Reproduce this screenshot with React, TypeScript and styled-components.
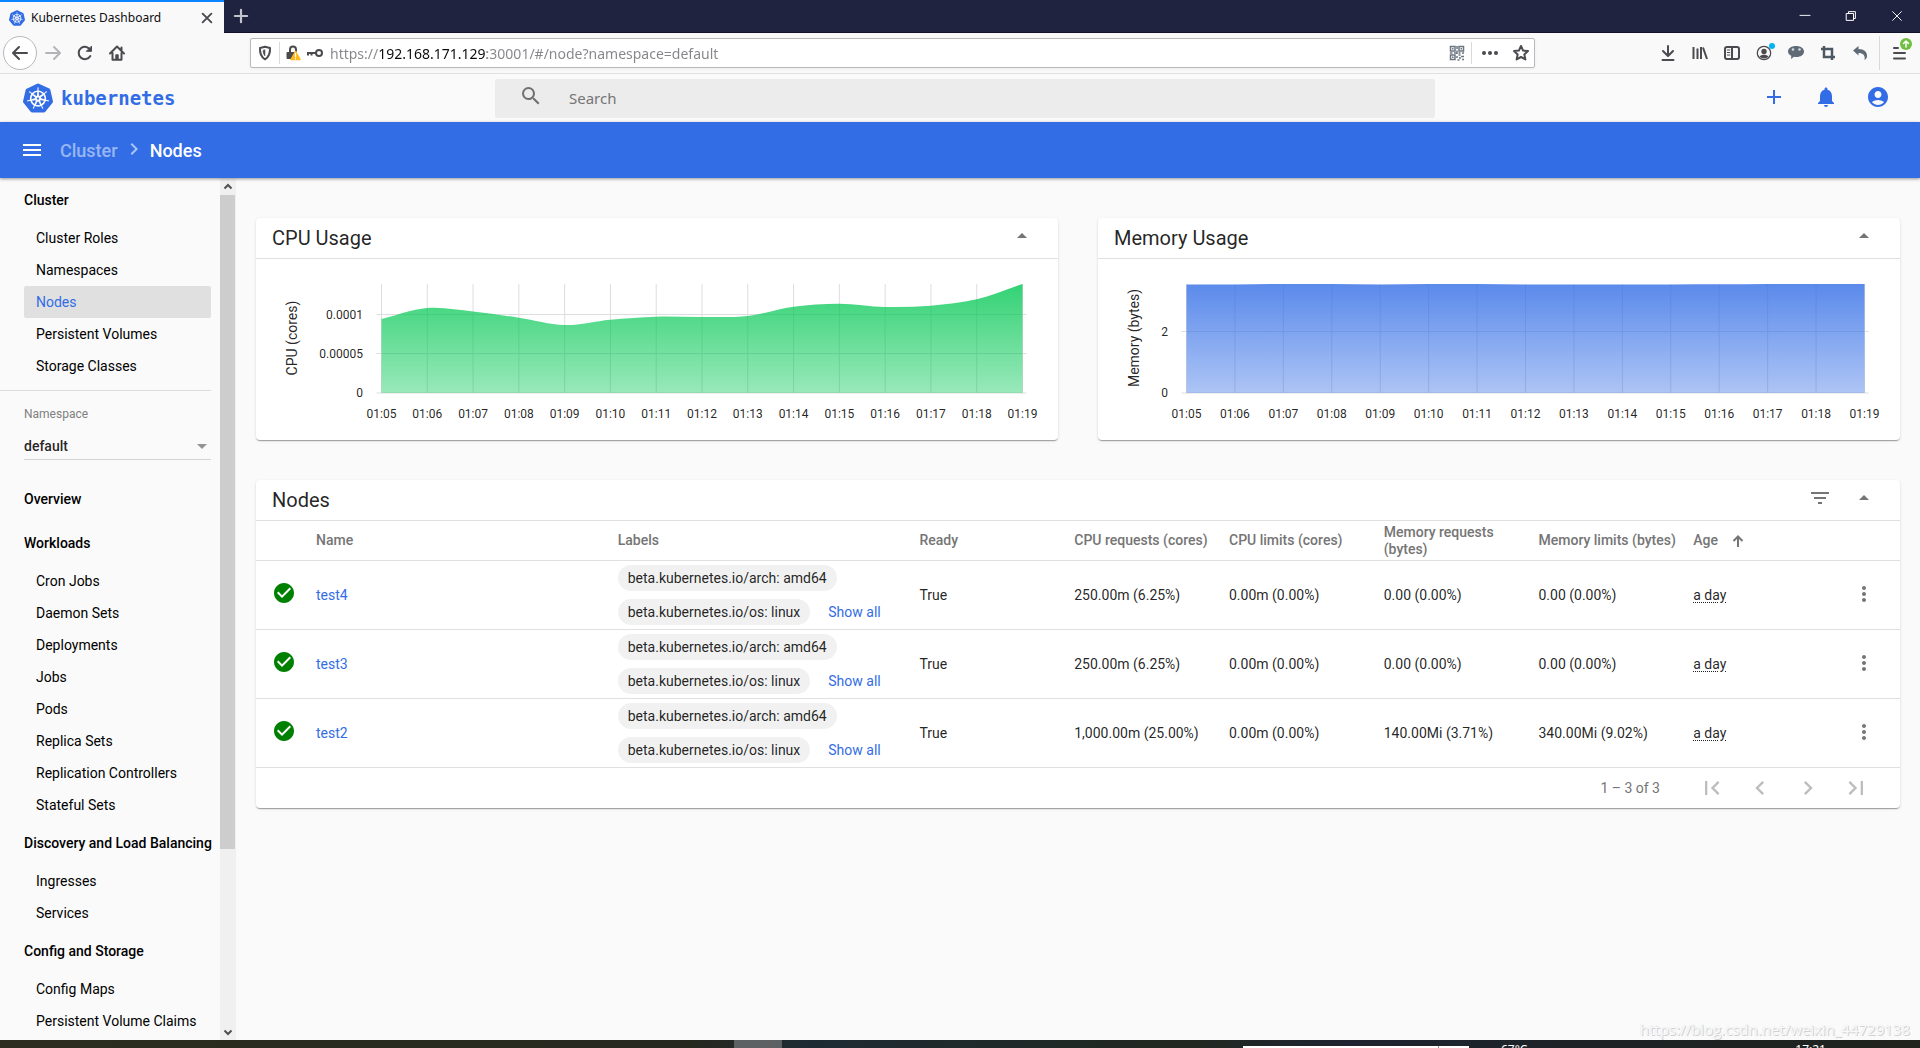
import React, { useId } from "react";
import styled, { createGlobalStyle, css } from "styled-components";
import {
  MdAccountCircle,
  MdAdd,
  MdArrowDropDown,
  MdArrowDropUp,
  MdCheckCircle,
  MdChevronLeft,
  MdChevronRight,
  MdFilterList,
  MdFirstPage,
  MdLastPage,
  MdMenu,
  MdMoreVert,
  MdNotifications,
  MdSearch,
} from "react-icons/md";
import { SiKubernetes } from "react-icons/si";

const blue = "#326de6";
const line = "#e0e0e0";
const uiFont = '"Noto Sans", "Open Sans", sans-serif';

const GlobalStyle = createGlobalStyle`
  *, *::before, *::after { box-sizing: border-box; }
  body {
    margin: 0;
    background: #fafafa;
    color: rgba(0, 0, 0, 0.87);
    font: 14px/20px Roboto, sans-serif;
  }
  button, input, select { font: inherit; color: inherit; }
  svg { display: block; flex: none; }
`;

const Window = styled.div`
  display: flex;
  flex-direction: column;
  height: 100vh;
  overflow: hidden;
`;

const PlainButton = styled.button`
  display: flex;
  align-items: center;
  justify-content: center;
  padding: 0;
  border: 0;
  background: none;
`;

/* Browser chrome */

const TabStrip = styled.div`
  display: flex;
  height: 33px;
  flex: none;
  background: #20233f;
  border-bottom: 1px solid #11122a;
  color: #fff;
  font-family: ${uiFont};
`;

const Tab = styled.div`
  display: flex;
  align-items: center;
  width: 224px;
  height: 33px;
  padding: 0 8px 0 9px;
  gap: 6px;
  background: #f9f9fa;
  border-top: 2px solid #0a84ff;
  color: #0c0c0d;
  font-size: 12px;
`;

const TabTitle = styled.span`
  flex: 1;
  white-space: nowrap;
`;

const TabButton = styled(PlainButton)`
  width: 18px;
  height: 24px;
  color: #4a4a4f;
`;

const NewTab = styled(PlainButton)`
  width: 34px;
  color: #c3c3cc;
`;

const WindowControls = styled.div`
  display: flex;
  margin-left: auto;
`;

const WindowButton = styled(PlainButton)`
  width: 46px;
  color: #fff;
`;

const NavBar = styled.div`
  display: flex;
  align-items: center;
  flex: none;
  height: 41px;
  padding: 0 3px;
  background: #f9f9fa;
  border-bottom: 1px solid #e0e0e1;
  color: #4a4a4f;
  font-family: ${uiFont};
`;

const NavButton = styled(PlainButton)<{ $faded?: boolean }>`
  width: 32px;
  height: 32px;
  color: ${(p) => (p.$faded ? "#b5b5b8" : "inherit")};
`;

const BackButton = styled(PlainButton)`
  width: 34px;
  height: 34px;
  border: 1px solid #b8b8ba;
  border-radius: 50%;
  background: #fff;
`;

const AddressBar = styled.div`
  display: flex;
  align-items: center;
  flex: 1;
  height: 30px;
  margin: 0 117px;
  border: 1px solid #b9b9bb;
  border-radius: 2px;
  background: #fff;
  box-shadow: 0 1px 3px rgba(0, 0, 0, 0.06);
`;

const AddressIcon = styled(PlainButton)<{ $w: number }>`
  width: ${(p) => p.$w}px;
  height: 28px;
`;

const BarDivider = styled.span<{ $h: number }>`
  width: 1px;
  height: ${(p) => p.$h}px;
  background: #d9d9dc;
`;

/* The host is dark, the scheme and the path are grey. */
const AddressInput = styled.input`
  flex: 1;
  min-width: 0;
  height: 28px;
  margin-left: 6px;
  padding: 0;
  border: 0;
  outline: 0;
  font-size: 14px;
  background: linear-gradient(
    90deg,
    #85858a 0 49px,
    #0c0c0d 49px 157px,
    #85858a 157px
  );
  background-clip: text;
  -webkit-background-clip: text;
  color: transparent;
`;

const Extensions = styled.div`
  display: flex;
  align-items: center;
  gap: 3px;
`;

const ExtensionIcons = styled.div`
  display: flex;
`;

const AppMenu = styled(PlainButton)`
  width: 34px;
  height: 34px;
`;

/* Dashboard header */

const Header = styled.header`
  display: grid;
  grid-template-columns: 1fr 940px 1fr;
  align-items: center;
  flex: none;
  height: 48px;
  padding: 0 13px 0 23px;
`;

const Brand = styled.a`
  display: flex;
  align-items: center;
  gap: 8px;
  color: ${blue};
  font: bold 19px/32px "DejaVu Sans Mono", monospace;
  text-decoration: none;
`;

const SearchBox = styled.label`
  display: flex;
  align-items: center;
  height: 39px;
  padding-left: 24px;
  gap: 26px;
  border-radius: 2px;
  background: #ececec;
  color: #6f6f6f;
  font: 15px/20px ${uiFont};
  & > svg { margin-bottom: 4px; }
`;

const SearchInput = styled.input`
  flex: 1;
  padding: 0;
  border: 0;
  outline: 0;
  background: none;
  &::placeholder { color: #757575; opacity: 1; }
`;

const HeaderActions = styled.div`
  display: flex;
  justify-content: flex-end;
  gap: 12px;
  padding: 0 9px 2px 0;
`;

const RoundButton = styled(PlainButton)<{ $color?: string }>`
  width: 40px;
  height: 40px;
  color: ${(p) => p.$color || "#757575"};
`;

const ActionBar = styled.nav`
  display: flex;
  align-items: center;
  flex: none;
  height: 56px;
  padding: 0 20px;
  background: ${blue};
  box-shadow: 0 1px 3px rgba(0, 0, 0, 0.4);
  color: #fff;
  font-size: 18px;
  font-weight: 500;
  position: relative;
`;

const Crumbs = styled.div`
  display: flex;
  align-items: center;
  gap: 4px;
  margin-left: 16px;
  padding-top: 2px;
`;

const CrumbLink = styled.a`
  color: rgba(255, 255, 255, 0.5);
  text-decoration: none;
`;

const FadedIcon = styled.span`
  margin-bottom: 4px;
  color: rgba(255, 255, 255, 0.6);
`;

const Body = styled.div`
  display: flex;
  flex: 1;
  min-height: 0;
`;

/* Sidebar */

const Sidebar = styled.aside`
  display: flex;
  flex: none;
  width: 236px;
`;

const SidebarScroll = styled.nav`
  flex: 1;
  overflow: hidden;
  padding-right: 9px;
`;

const GroupTitle = styled.a`
  display: block;
  padding-left: 24px;
  color: #000;
  font-weight: 500;
  line-height: 44px;
  text-decoration: none;
  white-space: nowrap;
`;

const NavLink = styled.a<{ $active?: boolean }>`
  display: block;
  margin-left: 24px;
  padding-left: 12px;
  border-radius: 2px;
  color: #000;
  line-height: 32px;
  text-decoration: none;
  white-space: nowrap;
  ${(p) =>
    p.$active &&
    css`
      background: #e0e0e0;
      color: ${blue};
    `}
`;

const NamespaceField = styled.div`
  margin: 8px 0 17px;
  padding: 13px 0 0 24px;
  border-top: 1px solid #dcdcdc;
`;

const NamespaceLabel = styled.label`
  display: block;
  color: #808080;
  font-size: 12px;
`;

const SelectWrap = styled.div`
  display: grid;
  align-items: center;
  margin-top: 9px;
  border-bottom: 1px solid #d4d4d4;
  color: #949494;
  & > * { grid-area: 1 / 1; }
  & > svg { justify-self: end; margin-right: -3px; pointer-events: none; }
`;

const Select = styled.select`
  appearance: none;
  width: 100%;
  height: 26px;
  padding: 0;
  border: 0;
  background: none;
  color: rgba(0, 0, 0, 0.87);
  font-weight: 500;
`;

const ScrollTrack = styled.div`
  display: flex;
  flex-direction: column;
  width: 16px;
  background: #f0f0f0;
  color: #505050;
`;

const ScrollArrow = styled.div`
  display: flex;
  align-items: center;
  justify-content: center;
  height: 17px;
  padding-right: 1px;
`;

const ScrollRun = styled.div`
  flex: 1;
`;

const ScrollThumb = styled.div`
  width: 15px;
  height: 79%;
  background: #cdcdcd;
`;

/* Content */

const Main = styled.main`
  display: flex;
  flex-direction: column;
  flex: 1;
  min-width: 0;
  gap: 40px;
  padding: 40px 20px;
`;

const ChartRow = styled.div`
  display: grid;
  grid-template-columns: 1fr 1fr;
  gap: 40px;
`;

const Card = styled.section`
  border-radius: 4px;
  background: #fff;
  box-shadow: 0 2px 1px -1px rgba(0, 0, 0, 0.2), 0 1px 1px rgba(0, 0, 0, 0.14),
    0 1px 3px rgba(0, 0, 0, 0.12);
`;

const CardHeader = styled.header`
  display: flex;
  justify-content: space-between;
  height: 41px;
  padding: 0 16px;
  border-bottom: 1px solid ${line};
`;

const CardTitle = styled.h2`
  margin: 0;
  font-size: 20px;
  font-weight: 400;
  line-height: 40px;
`;

const CardActions = styled.div`
  display: flex;
  gap: 4px;
  height: 36px;
  align-items: center;
`;

const ChartSvg = styled.svg`
  width: 100%;
  height: auto;
  font-family: Roboto, sans-serif;
  font-size: 12px;
  fill: rgba(0, 0, 0, 0.87);
`;

const Table = styled.table`
  display: block;
`;

const TableSection = styled.tbody`
  display: block;
`;

const Row = styled.tr<{ $head?: boolean }>`
  display: grid;
  grid-template-columns: 60px repeat(2, 39fr) repeat(6, 20fr) 52px;
  align-items: center;
  min-height: ${(p) => (p.$head ? 40 : 69)}px;
  border-bottom: 1px solid ${line};
`;

const HeadCell = styled.th`
  display: flex;
  align-items: center;
  gap: 14px;
  padding: 0;
  color: #757575;
  font-weight: 500;
  line-height: 17px;
  text-align: left;
`;

const Cell = styled.td`
  padding: 0;
`;

const IconCell = styled(Cell)`
  padding: 0 0 4px 16px;
  color: green;
`;

const MenuCell = styled(Cell)`
  padding-bottom: 2px;
  justify-self: start;
  margin-left: -4px;
`;

const Link = styled.a`
  color: ${blue};
  text-decoration: none;
`;

const Chips = styled.div`
  display: flex;
  flex-direction: column;
  align-items: flex-start;
  gap: 8px;
`;

const ChipLine = styled.div`
  display: flex;
  align-items: center;
  gap: 18px;
  white-space: nowrap;
`;

const Chip = styled.span`
  padding: 3px 10px;
  border-radius: 13px;
  background: #f1f1f1;
`;

const Age = styled.span`
  text-decoration: underline dotted 1px;
  text-underline-offset: 2px;
`;

const Pager = styled.footer`
  display: flex;
  align-items: center;
  justify-content: flex-end;
  height: 40px;
  padding-right: 24px;
  color: #757575;
`;

const PagerButtons = styled.div`
  display: flex;
  gap: 8px;
  margin-left: 32px;
`;

/* Strip of the desktop taskbar */

const Taskbar = styled.div`
  display: flex;
  flex: none;
  height: 8px;
  overflow: hidden;
  background: linear-gradient(90deg, #2c2d20, #26281f 36%, #1e2a33 42%, #222820 62%, #1d2330 70%, #20241c);
  color: #fff;
  font: 12px/14px ${uiFont};
`;

const TaskSpace = styled.span<{ $w: number; $grow?: boolean }>`
  flex: ${(p) => (p.$grow ? 1 : "none")};
  width: ${(p) => p.$w}px;
`;

const ActiveTask = styled.span`
  width: 48px;
  background: #5d6164;
`;

const TaskSearch = styled.span`
  display: flex;
  justify-content: flex-end;
  width: 226px;
  height: 2px;
  margin-top: 6px;
  padding-right: 30px;
  background: #fff;
  &::after { content: ""; width: 1px; background: #999; }
`;

const TaskText = styled.span`
  padding-top: 3px;
`;

const Watermark = styled.div`
  position: absolute;
  right: 10px;
  bottom: 8px;
  color: #fafafa;
  font: 15px/22px "Open Sans", sans-serif;
  text-shadow: 1px 1px 0 #d0d0d0, 0 0 1px #d8d8d8;
  pointer-events: none;
`;

/* Small drawings of the browser toolbar, 16x16 */

const Glyph = ({ children, size = 16, w = 2 }: { children: React.ReactNode; size?: number; w?: number }) => (
  <svg
    width={size}
    height={size}
    viewBox="0 0 16 16"
    fill="none"
    stroke="currentColor"
    strokeWidth={w}
    strokeLinecap="round"
    strokeLinejoin="round"
    overflow="visible"
    aria-hidden
  >
    {children}
  </svg>
);

const BackGlyph = () => <Glyph><path d="M15 8H1.500M7 2 1 8l6 6" /></Glyph>;
const ForwardGlyph = () => <Glyph><path d="M1 8h13.500M9 2l6 6-6 6" /></Glyph>;
const ReloadGlyph = () => (
  <Glyph><path d="M13.300 11a6.200 6.200 0 1 1 .2-5.700" /><path d="M14.500 1.500v4.800H9.700z" fill="currentColor" strokeWidth={1} /></Glyph>
);
const HomeGlyph = () => (
  <Glyph><path d="M1 8.500 8 1.500l7 7M3.500 8v6.800h9V8M12.500 5V2.500" /><path d="M7 14V10h2v4z" fill="currentColor" strokeWidth={1.500} /></Glyph>
);
const ShieldGlyph = () => (
  <Glyph><path d="M8 1.800 13 3c.3 5-1 9-5 11.300C4 12 2.700 8 3 3z" /><path d="M8 5v6c-1.500-1.500-2-3.500-2-5.500z" fill="currentColor" strokeWidth={0.500} /></Glyph>
);
const LockGlyph = () => (
  <Glyph>
    <path d="M5 8V4.500a3 3 0 0 1 6 0V6" />
    <rect x="1.500" y="7" width="9" height="7" rx="1" fill="currentColor" stroke="none" />
    <path d="m10.500 6.500 4.500 8H6z" fill="#ffb81c" stroke="#ffb81c" strokeWidth={1.500} />
    <path d="M10.500 8.500v3M10.500 13.500v.3" stroke="#fff" strokeWidth={1.300} />
  </Glyph>
);
const KeyGlyph = () => <Glyph><circle cx="12" cy="8" r="3" /><path d="M9 8H0M1 8v2.500M4.500 8v2.500" strokeLinecap="butt" /></Glyph>;
const QrGlyph = () => (
  <Glyph w={1.500}>
    <g stroke="#6b7680" strokeLinecap="butt" strokeLinejoin="miter">
      <path d="M1.500 1.500H6V6H1.500zM10 1.500h4.500V6H10zM1.500 10H6v4.500H1.500z" />
      <path d="M3 3.800h1.500M11.500 3.800H13M3 12.300h1.500M8 1v3M8 5.500V9M1 8h2.500M5 8h3M9.500 8h2M13 8h2M8 11v2M9.500 10h2M12 11.500h3M10 13h2M13 14.500h2M8.500 15h2" />
    </g>
  </Glyph>
);
const DotsGlyph = () => (
  <Glyph><g fill="currentColor" stroke="none"><circle cx="2" cy="8" r="2" /><circle cx="8" cy="8" r="2" /><circle cx="14" cy="8" r="2" /></g></Glyph>
);
const StarGlyph = () => (
  <Glyph><path d="m8 1 2.100 4.600 4.900.5-3.700 3.300 1.100 5L8 12l-4.400 2.400 1.100-5L1 6.100l4.900-.5z" /></Glyph>
);
const DownloadGlyph = () => <Glyph><path d="M8 1v9.500M3 6l5 5 5-5M2.500 15h11" /></Glyph>;
const LibraryGlyph = () => <Glyph><path d="M1.500 2v12M5.500 3.500V14M9 2v12M11 2.500 15 14" strokeWidth={2} strokeLinecap="butt" /></Glyph>;
const SidebarGlyph = () => (
  <Glyph><rect x="1" y="2" width="14" height="12" rx="2" /><path d="M8 2v12" /><path d="M3.300 5h2.500M3.300 7.500h2.500M3.300 10h2.500" strokeWidth={1} /></Glyph>
);
const UserGlyph = () => (
  <Glyph w={1.300}>
    <circle cx="8" cy="8" r="6.700" />
    <circle cx="8" cy="6.500" r="2.700" fill="currentColor" stroke="none" />
    <path d="M3.500 11.500c2-2.200 7-2.200 9 0-2.200 2.600-6.800 2.600-9 0z" fill="currentColor" stroke="none" />
    <circle cx="16" cy="1" r="3" fill="#00b3f4" stroke="none" />
  </Glyph>
);
const ChatGlyph = () => (
  <Glyph>
    <path d="M8 1c4.400 0 8 2.200 8 5.500S12.600 12 8.500 12c-1 0-1.600-.1-2.500-.3L3 14l.3-3.200C1.200 9.800 0 8.300 0 6.500 0 3.200 3.600 1 8 1z" fill="#5f6b76" stroke="none" />
    <circle cx="5" cy="4.500" r="1.300" fill="#d5dade" stroke="none" /><circle cx="11.500" cy="4.500" r="1.300" fill="#d5dade" stroke="none" />
  </Glyph>
);
const CropGlyph = () => (
  <Glyph><path d="M4 1v11h11M1 4h11v11" stroke="#4d5863" strokeWidth={2.500} strokeLinecap="butt" strokeLinejoin="miter" /></Glyph>
);
const UndoGlyph = () => (
  <Glyph><path d="M1 5.500 6.500 1v3c5.500 0 9 3 8.500 7.500-.2 1.500-1 2.800-2.500 3.500C13.500 10.500 11 8 6.500 8v2.500z" fill="#5f6b76" stroke="none" /></Glyph>
);
const MenuGlyph = () => (
  <Glyph>
    <path d="M2 3h4M2 8h11M2 13.500h11" />
    <circle cx="14" cy="-1" r="6" fill="#6fbf40" stroke="none" />
    <path d="M14 2v-5.500M11.500-1.500 14-4l2.500 2.500" stroke="#fff" strokeWidth={1.500} />
  </Glyph>
);
const CrossGlyph = ({ w = 2, size = 10 }: { w?: number; size?: number }) => (
  <Glyph w={w} size={size}><path d="M1 1l14 14M15 1 1 15" /></Glyph>
);
const CaretGlyph = ({ down = false }: { down?: boolean }) => (
  <Glyph size={8} w={4}><path d={down ? "M1 5l7 7 7-7" : "M1 11l7-7 7 7"} strokeLinecap="butt" strokeLinejoin="miter" /></Glyph>
);
const SortGlyph = () => (
  <Glyph size={12} w={2.700}><path d="M8 16V2M2 8l6-6 6 6" strokeLinecap="butt" strokeLinejoin="miter" /></Glyph>
);

/* Area charts */

type ChartProps = {
  label: string;
  color: string;
  left: number;
  ticks: { text: string; y: number }[];
  labelX: number;
  points: number[];
};

const TIMES = Array.from({ length: 15 }, (_, i) => `01:${String(i + 5).padStart(2, "0")}`);
const RIGHT = 766.5;
const TOP = 25;
const BOTTOM = 134;

function AreaChart({ label, color, left, ticks, labelX, points }: ChartProps) {
  const id = useId();
  const step = (RIGHT - left) / (points.length - 1);
  const x = (i: number) => left + i * step;
  const slope = (i: number) => {
    const a = Math.max(0, i - 1);
    const b = Math.min(points.length - 1, i + 1);
    return (points[b] - points[a]) / (b - a) / 3;
  };
  const curve = points
    .slice(1)
    .map((y, i) => `C${x(i) + step / 3},${points[i] + slope(i)} ${x(i + 1) - step / 3},${y - slope(i + 1)} ${x(i + 1)},${y}`)
    .join("");
  return (
    <ChartSvg viewBox="0 0 802 181" role="img" aria-label={label}>
      <defs>
        <linearGradient id={id} x1="0" y1="0" x2="0" y2="1">
          <stop offset="0" stopColor={color} stopOpacity="0.8" />
          <stop offset="1" stopColor={color} stopOpacity="0.4" />
        </linearGradient>
      </defs>
      <g stroke="#ddd">
        {TIMES.map((t, i) => <path key={t} d={`M${x(i)} ${TOP}V${BOTTOM}`} />)}
        {ticks.map((t) => <path key={t.text} d={`M${left - 5} ${t.y}H${RIGHT + 4}`} />)}
      </g>
      <path d={`M${left},${points[0]}${curve}V${BOTTOM}H${left}Z`} fill={`url(#${id})`} />
      {ticks.map((t) => (
        <text key={t.text} x={labelX} y={t.y} textAnchor="end" dominantBaseline="central">{t.text}</text>
      ))}
      {TIMES.map((t, i) => (
        <text key={t} x={x(i)} y="155" textAnchor="middle" dominantBaseline="central">{t}</text>
      ))}
      <text transform="translate(36 79) rotate(-90)" textAnchor="middle" dominantBaseline="central" fontSize="14">
        {label}
      </text>
    </ChartSvg>
  );
}

const CPU_POINTS = [60, 49, 52.5, 58.700, 66, 60.700, 57.700, 58, 57, 47.700, 44.700, 48, 46.700, 40.300, 25];
const MEMORY_POINTS = [25.5, 25.500, 25, 25, 25.500, 25, 25, 25.500, 25.500, 25.500, 25.500, 25.300, 25, 25, 25];

const NODES = [
  { name: "test4", cells: ["250.00m (6.25%)", "0.00m (0.00%)", "0.00 (0.00%)", "0.00 (0.00%)"] },
  { name: "test3", cells: ["250.00m (6.25%)", "0.00m (0.00%)", "0.00 (0.00%)", "0.00 (0.00%)"] },
  { name: "test2", cells: ["1,000.00m (25.00%)", "0.00m (0.00%)", "140.00Mi (3.71%)", "340.00Mi (9.02%)"] },
];

const HEADINGS = ["Name", "Labels", "Ready", "CPU requests (cores)", "CPU limits (cores)", "Memory requests (bytes)", "Memory limits (bytes)"];

const GROUPS = [
  {
    title: "Workloads",
    items: ["Cron Jobs", "Daemon Sets", "Deployments", "Jobs", "Pods", "Replica Sets", "Replication Controllers", "Stateful Sets"],
  },
  { title: "Discovery and Load Balancing", items: ["Ingresses", "Services"] },
  { title: "Config and Storage", items: ["Config Maps", "Persistent Volume Claims"] },
];

function NavGroup({ title, items, active }: { title: string; items: string[]; active?: string }) {
  return (
    <div>
      <GroupTitle href="#">{title}</GroupTitle>
      {items.map((item) => (
        <NavLink key={item} href="#" $active={item === active}>{item}</NavLink>
      ))}
    </div>
  );
}

function Browser() {
  return (
    <>
      <TabStrip>
        <Tab>
          <SiKubernetes size={16} color={blue} />
          <TabTitle>Kubernetes Dashboard</TabTitle>
          <TabButton aria-label="Close tab"><CrossGlyph w={3} /></TabButton>
        </Tab>
        <NewTab aria-label="New tab"><Glyph size={14} w={2.500}><path d="M8 1v14M1 8h14" /></Glyph></NewTab>
        <WindowControls>
          <WindowButton aria-label="Minimize"><Glyph size={10} w={1.500}><path d="M0 7h16" /></Glyph></WindowButton>
          <WindowButton aria-label="Restore"><Glyph size={10} w={1.600}><path d="M1 4h11v11H1zM4 4V1h11v11h-3" /></Glyph></WindowButton>
          <WindowButton aria-label="Close"><CrossGlyph w={1.500} /></WindowButton>
        </WindowControls>
      </TabStrip>
      <NavBar>
        <BackButton aria-label="Back"><BackGlyph /></BackButton>
        <NavButton aria-label="Forward" $faded><ForwardGlyph /></NavButton>
        <NavButton aria-label="Reload"><ReloadGlyph /></NavButton>
        <NavButton aria-label="Home"><HomeGlyph /></NavButton>
        <AddressBar>
          <AddressIcon $w={28} aria-label="Protections"><ShieldGlyph /></AddressIcon>
          <BarDivider $h={22} />
          <AddressIcon $w={26} aria-label="Connection"><LockGlyph /></AddressIcon>
          <AddressIcon $w={18} aria-label="Saved login"><KeyGlyph /></AddressIcon>
          <AddressInput aria-label="Address" defaultValue="https://192.168.171.129:30001/#/node?namespace=default" />
          <AddressIcon $w={28} aria-label="QR code"><QrGlyph /></AddressIcon>
          <BarDivider $h={22} />
          <AddressIcon $w={36} aria-label="Page actions"><DotsGlyph /></AddressIcon>
          <AddressIcon $w={26} aria-label="Bookmark"><StarGlyph /></AddressIcon>
        </AddressBar>
        <Extensions>
          <ExtensionIcons>
            <NavButton aria-label="Downloads"><DownloadGlyph /></NavButton>
            <NavButton aria-label="Library"><LibraryGlyph /></NavButton>
            <NavButton aria-label="Sidebars"><SidebarGlyph /></NavButton>
            <NavButton aria-label="Account"><UserGlyph /></NavButton>
            <NavButton aria-label="Chat"><ChatGlyph /></NavButton>
            <NavButton aria-label="Crop"><CropGlyph /></NavButton>
            <NavButton aria-label="Undo"><UndoGlyph /></NavButton>
          </ExtensionIcons>
          <BarDivider $h={34} />
          <AppMenu aria-label="Menu"><MenuGlyph /></AppMenu>
        </Extensions>
      </NavBar>
    </>
  );
}

function NodesTable() {
  return (
    <Card>
      <CardHeader>
        <CardTitle>Nodes</CardTitle>
        <CardActions>
          <RoundButton aria-label="Filter"><MdFilterList size={24} /></RoundButton>
          <RoundButton aria-label="Collapse"><MdArrowDropUp size={24} /></RoundButton>
        </CardActions>
      </CardHeader>
      <Table>
        <TableSection as="thead">
          <Row $head>
            <HeadCell aria-label="Status" />
            {HEADINGS.map((h) => <HeadCell key={h}>{h}</HeadCell>)}
            <HeadCell>Age <SortGlyph /></HeadCell>
            <HeadCell aria-label="Actions" />
          </Row>
        </TableSection>
        <TableSection>
          {NODES.map((n) => (
            <Row key={n.name}>
              <IconCell><MdCheckCircle size={24} /></IconCell>
              <Cell><Link href="#">{n.name}</Link></Cell>
              <Cell>
                <Chips>
                  <Chip>beta.kubernetes.io/arch: amd64</Chip>
                  <ChipLine>
                    <Chip>beta.kubernetes.io/os: linux</Chip>
                    <Link href="#">Show all</Link>
                  </ChipLine>
                </Chips>
              </Cell>
              <Cell>True</Cell>
              {n.cells.map((c, i) => <Cell key={i}>{c}</Cell>)}
              <Cell><Age>a day</Age></Cell>
              <MenuCell><RoundButton aria-label={`Actions for ${n.name}`}><MdMoreVert size={24} /></RoundButton></MenuCell>
            </Row>
          ))}
        </TableSection>
      </Table>
      <Pager>
        1 – 3 of 3
        <PagerButtons>
          <RoundButton $color="#bdbdbd" aria-label="First page"><MdFirstPage size={28} /></RoundButton>
          <RoundButton $color="#bdbdbd" aria-label="Previous page"><MdChevronLeft size={28} /></RoundButton>
          <RoundButton $color="#bdbdbd" aria-label="Next page"><MdChevronRight size={28} /></RoundButton>
          <RoundButton $color="#bdbdbd" aria-label="Last page"><MdLastPage size={28} /></RoundButton>
        </PagerButtons>
      </Pager>
    </Card>
  );
}

function ChartCard({ title, ...chart }: ChartProps & { title: string }) {
  return (
    <Card>
      <CardHeader>
        <CardTitle>{title}</CardTitle>
        <CardActions>
          <RoundButton aria-label="Collapse"><MdArrowDropUp size={24} /></RoundButton>
        </CardActions>
      </CardHeader>
      <AreaChart {...chart} />
    </Card>
  );
}

export default function App() {
  return (
    <Window>
      <GlobalStyle />
      <Browser />
      <Header>
        <Brand href="#"><SiKubernetes size={30} />kubernetes</Brand>
        <SearchBox>
          <MdSearch size={24} />
          <SearchInput type="text" placeholder="Search" aria-label="Search" />
        </SearchBox>
        <HeaderActions>
          <RoundButton $color={blue} aria-label="Create"><MdAdd size={24} /></RoundButton>
          <RoundButton $color={blue} aria-label="Notifications"><MdNotifications size={24} /></RoundButton>
          <RoundButton $color={blue} aria-label="User"><MdAccountCircle size={24} /></RoundButton>
        </HeaderActions>
      </Header>
      <ActionBar>
        <PlainButton aria-label="Toggle navigation"><MdMenu size={24} color="#fff" /></PlainButton>
        <Crumbs>
          <CrumbLink href="#">Cluster</CrumbLink>
          <FadedIcon><MdChevronRight size={24} /></FadedIcon>
          <span>Nodes</span>
        </Crumbs>
      </ActionBar>
      <Body>
        <Sidebar>
          <SidebarScroll>
            <NavGroup
              title="Cluster"
              items={["Cluster Roles", "Namespaces", "Nodes", "Persistent Volumes", "Storage Classes"]}
              active="Nodes"
            />
            <NamespaceField>
              <NamespaceLabel htmlFor="namespace">Namespace</NamespaceLabel>
              <SelectWrap>
                <Select id="namespace" defaultValue="default"><option>default</option></Select>
                <MdArrowDropDown size={24} />
              </SelectWrap>
            </NamespaceField>
            <GroupTitle href="#">Overview</GroupTitle>
            {GROUPS.map((g) => <NavGroup key={g.title} {...g} />)}
          </SidebarScroll>
          <ScrollTrack>
            <ScrollArrow><CaretGlyph /></ScrollArrow>
            <ScrollRun><ScrollThumb /></ScrollRun>
            <ScrollArrow><CaretGlyph down /></ScrollArrow>
          </ScrollTrack>
        </Sidebar>
        <Main>
          <ChartRow>
            <ChartCard
              title="CPU Usage"
              label="CPU (cores)"
              color="#00c752"
              left={125.5}
              labelX={107}
              ticks={[{ text: "0.0001", y: 55.5 }, { text: "0.00005", y: 94.5 }, { text: "0", y: 134 }]}
              points={CPU_POINTS}
            />
            <ChartCard
              title="Memory Usage"
              label="Memory (bytes)"
              color={blue}
              left={88.5}
              labelX={70}
              ticks={[{ text: "2", y: 72.5 }, { text: "0", y: 134 }]}
              points={MEMORY_POINTS}
            />
          </ChartRow>
          <NodesTable />
        </Main>
      </Body>
      <Taskbar>
        <TaskSpace $w={734} />
        <ActiveTask />
        <TaskSpace $w={461} />
        <TaskSearch />
        <TaskSpace $w={32} />
        <TaskText>67°C</TaskText>
        <TaskSpace $w={10} $grow />
        <TaskText>17:21</TaskText>
        <TaskSpace $w={94} />
      </Taskbar>
      <Watermark>https://blog.csdn.net/weixin_44729138</Watermark>
    </Window>
  );
}
